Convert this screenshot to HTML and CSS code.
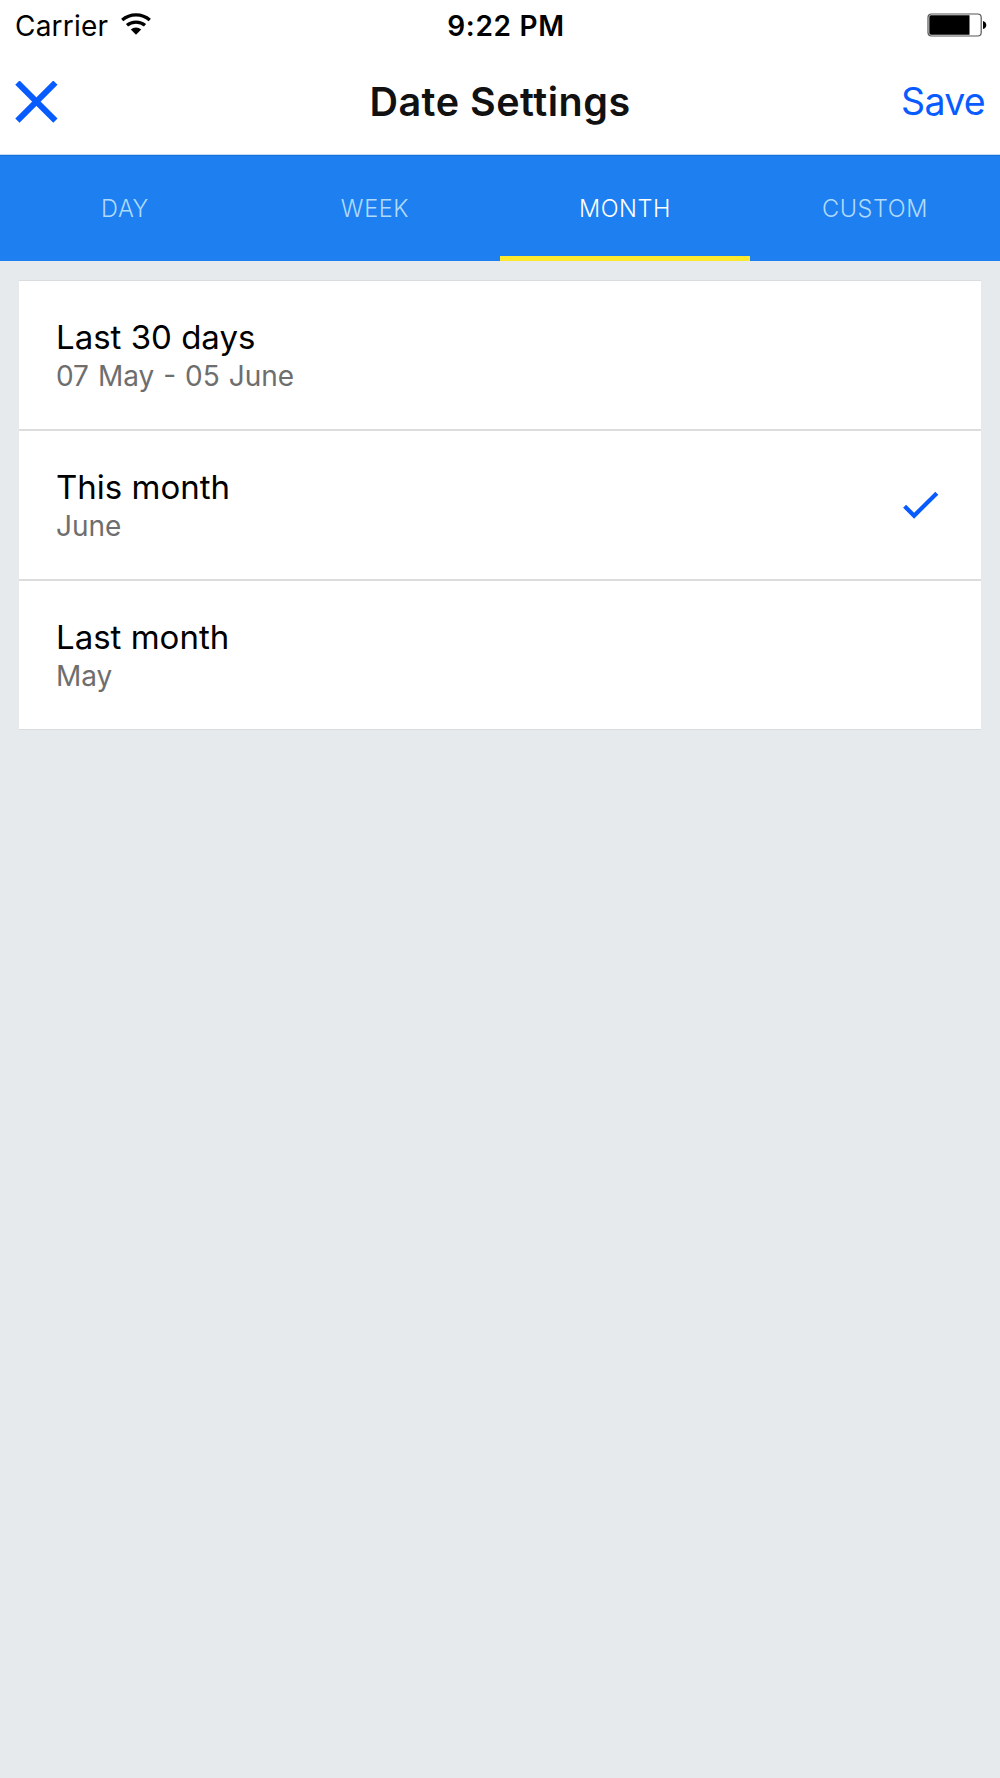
FILE: index.html
```html
<!DOCTYPE html>
<html lang="en">
<head>
<meta charset="utf-8">
<title>Date Settings</title>
<link rel="stylesheet" href="styles.css">
</head>
<body>
<div class="status">
  <div class="status-left">
    <span class="carrier">Carrier</span>
    <svg class="wifi" width="30" height="22" viewBox="0 0 30 22" aria-hidden="true">
      <path d="M1.2 7C9 .2 21 .2 28.8 7M6 12.3C11 8.1 19 8.1 24 12.3" fill="none" stroke="#000" stroke-width="3.3"/>
      <path d="M9.8 16.5C12.7 13.8 17.3 13.8 20.2 16.5L15 21.7Z"/>
    </svg>
  </div>
  <span class="time">9:22 PM</span>
  <svg class="battery" width="60" height="24" viewBox="0 0 60 24" aria-hidden="true">
    <rect x="1" y="1" width="53.2" height="22" rx="3.5" fill="#fff" stroke="#555" stroke-width="1.2"/>
    <path d="M4 2.2H42.5V21.8H4Q2.3 21.8 2.3 20V4Q2.3 2.2 4 2.2Z"/>
    <path d="M56 8Q59.3 9 59.3 12T56 16Z"/>
  </svg>
</div>
<header class="navbar">
  <svg class="close" width="43" height="42" viewBox="0 0 43 42" aria-label="Close">
    <path d="M2.4 1.6L40.4 39.6M40.4 1.6L2.4 39.6" stroke="#085cff" stroke-width="6"/>
  </svg>
  <h1 class="title">Date Settings</h1>
  <a class="save">Save</a>
</header>
<nav class="tabs">
  <a class="tab"><span>DAY</span></a>
  <a class="tab"><span>WEEK</span></a>
  <a class="tab active"><span>MONTH</span></a>
  <a class="tab"><span>CUSTOM</span></a>
</nav>
<main class="list">
  <div class="row">
    <div><div class="name">Last 30 days</div><div class="range">07 May - 05 June</div></div>
  </div>
  <div class="row">
    <div><div class="name">This month</div><div class="range">June</div></div>
    <svg class="check" width="36" height="28" viewBox="0 0 36 28" aria-label="Selected">
      <path d="M1.6 15.2L11.1 24.7L33.8 2.2" fill="none" stroke="#085cff" stroke-width="4.2"/>
    </svg>
  </div>
  <div class="row">
    <div><div class="name">Last month</div><div class="range">May</div></div>
  </div>
</main>
</body>
</html>
```
FILE: styles.css
```css
* { box-sizing: border-box; }
body {
  margin: 0;
  min-height: 1778px;
  background: #e6eaed;
  font-family: Inter, "Liberation Sans", sans-serif;
  color: #000;
}
.status {
  height: 50px;
  padding: 0 13px 0 15px;
  background: #fff;
  display: grid;
  grid-template-columns: 1fr auto 1fr;
  align-items: center;
}
.status-left { display: flex; align-items: center; gap: 13px; }
.wifi { margin-bottom: 2px; }
.carrier { padding-top: 1px; font-size: 28px; letter-spacing: 0.2px; }
.time { padding: 1px 0 0 10px; font-size: 28px; font-weight: 600; letter-spacing: 0.7px; }
.battery { justify-self: end; }
.navbar {
  height: 105px;
  padding: 0 15px;
  background: #fff;
  border-bottom: 1px solid #c3dbf5;
  display: grid;
  grid-template-columns: 1fr auto 1fr;
  align-items: center;
}
.title { margin: 0; font-size: 39.5px; font-weight: 600; letter-spacing: 0.5px; color: #111; }
.save { padding-bottom: 1px; justify-self: end; font-size: 37.5px; letter-spacing: -0.7px; color: #085cff; }
.tabs {
  height: 106px;
  display: grid;
  grid-template-columns: repeat(4, 1fr);
  background: #1e7ff0;
  border-top: 1px solid #1a72dc;
}
.tab {
  padding-top: 4px;
  display: flex;
  align-items: center;
  justify-content: center;
  border-bottom: 5px solid transparent;
  font-size: 23.5px;
  font-weight: 350;
  letter-spacing: 0.6px;
  color: #b0dafc;
}
.tab.active { color: #fff; border-bottom-color: #ffe92f; }
.list {
  margin: 19px 19px 0;
  background: #fff;
  border-top: 1px solid #d9dde0;
  border-bottom: 1px solid #d9dde0;
}
.row {
  height: 150px;
  padding: 0 42px 0 37px;
  display: flex;
  align-items: center;
  justify-content: space-between;
  border-bottom: 2px solid #dcdcdd;
}
.row:last-child { height: 148px; border-bottom: 0; }
.name { padding-top: 2px; font-size: 33px; line-height: 40px; }
.range { font-size: 28px; line-height: 38px; word-spacing: 1.1px; color: #6e6e6e; }
```
